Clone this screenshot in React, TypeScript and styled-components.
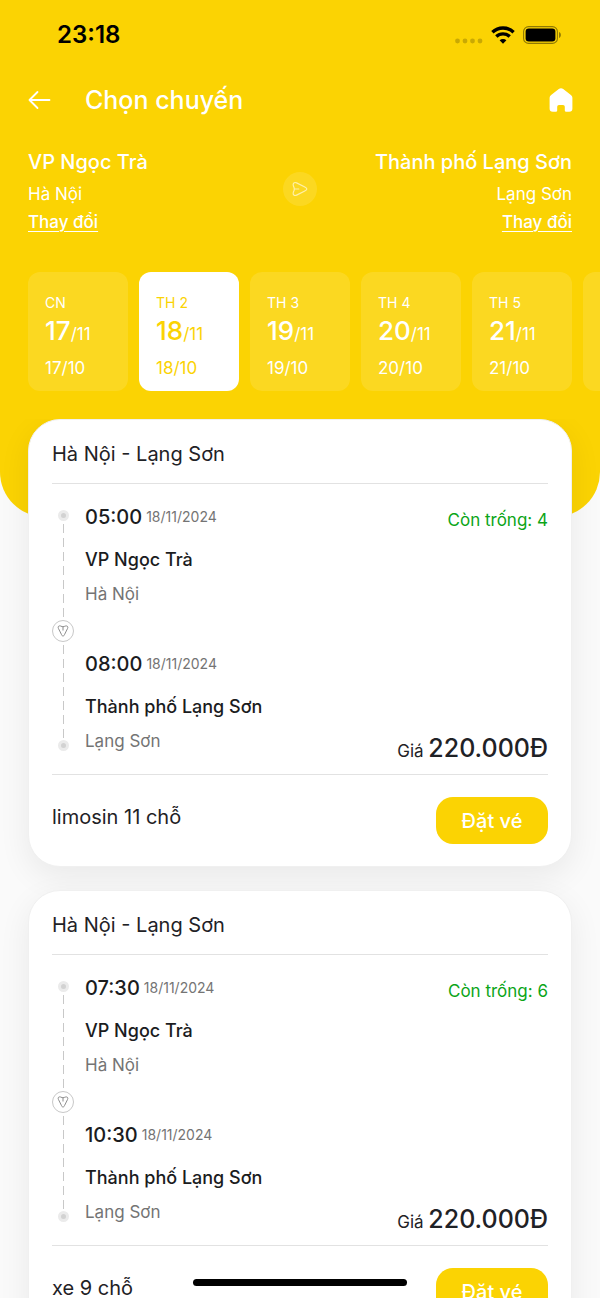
import React from "react";
import styled, { createGlobalStyle, css } from "styled-components";

const yellow = "#fbd303";

const GlobalStyle = createGlobalStyle`
  * { box-sizing: border-box; }
  body { margin: 0; background: #fafafa; }
  body, button { font-family: Inter, "Liberation Sans", sans-serif; }
  h1, h2, p, ul { margin: 0; padding: 0; font-weight: inherit; }
  ul { list-style: none; }
  button { border: 0; padding: 0; background: none; color: inherit; cursor: pointer; }
`;

const Screen = styled.div`
  position: relative;
  display: flex;
  flex-direction: column;
  height: 100vh;
  overflow: hidden;
  color: #1f2226;
`;

const Header = styled.header`
  flex: none;
  padding-bottom: 126px;
  border-radius: 0 0 45px 45px;
  background: ${yellow};
  color: #fff;
`;

const StatusBar = styled.div`
  display: flex;
  align-items: center;
  justify-content: space-between;
  height: 69px;
  padding: 0 39px 0 57px;
  color: #000;
`;

const Clock = styled.time`
  font-size: 24px;
  font-weight: 600;
  line-height: 28px;
`;

const StatusIcons = styled.div`
  display: flex;
  align-items: center;
  gap: 8px;
`;

const NavBar = styled.div`
  display: flex;
  align-items: center;
  height: 62px;
  padding: 0 27px 0 28px;
`;

const IconButton = styled.button`
  display: flex;
`;

const PageTitle = styled.h1`
  flex: 1;
  margin-left: 34px;
  font-size: 25px;
  font-weight: 500;
  line-height: 32px;
`;

const Route = styled.div`
  display: flex;
  align-items: flex-start;
  justify-content: space-between;
  padding: 17px 28px 0;
`;

const Place = styled.div<{ $end?: boolean }>`
  flex: 1;
  display: flex;
  flex-direction: column;
  align-items: ${(p) => (p.$end ? "flex-end" : "flex-start")};
`;

const PlaceName = styled.p`
  font-size: 20px;
  font-weight: 500;
  line-height: 28px;
  white-space: nowrap;
`;

const PlaceCity = styled.p`
  margin-top: 4px;
  font-size: 17px;
  line-height: 28px;
`;

const ChangeLink = styled.a`
  font-size: 17px;
  font-weight: 500;
  line-height: 28px;
  color: inherit;
  text-underline-offset: 3px;
`;

const Direction = styled.div`
  display: flex;
  align-items: center;
  justify-content: center;
  width: 34px;
  height: 34px;
  margin-top: 24px;
  border-radius: 50%;
  background: rgba(255, 255, 255, 0.12);
`;

const Dates = styled.div`
  display: flex;
  gap: 11px;
  margin-top: 36px;
  padding: 0 28px;
  overflow: hidden;
`;

const DateTile = styled.button<{ $selected?: boolean }>`
  flex: none;
  display: flex;
  flex-direction: column;
  align-items: flex-start;
  width: 100px;
  height: 119px;
  padding: 21px 17px 0;
  border-radius: 12px;
  background: rgba(255, 255, 255, 0.12);
  white-space: nowrap;
  ${(p) => p.$selected && css`
    background: #fff;
    color: ${yellow};
  `}
`;

const Weekday = styled.span`
  font-size: 14px;
  line-height: 20px;
`;

const SolarDate = styled.span`
  display: flex;
  align-items: baseline;
  font-size: 17px;
  line-height: 36px;
`;

const Day = styled.span`
  font-size: 26px;
  font-weight: 500;
`;

const LunarDate = styled.span`
  font-size: 17px;
  line-height: 32px;
`;

const TripList = styled.ul`
  flex: 1;
  min-height: 0;
  margin-top: -98px;
  padding: 0 28px;
  overflow-y: auto;
  scrollbar-width: none;
`;

const TripCard = styled.li`
  margin-bottom: 23px;
  padding: 0 23px;
  border: 1px solid #f0f0f0;
  border-radius: 32px;
  background: #fff;
  box-shadow: 0 10px 32px rgba(0, 0, 0, 0.07);
`;

const TripTitle = styled.h2`
  padding: 22px 0 17px;
  border-bottom: 1px solid #e2e2e2;
  font-size: 20px;
  line-height: 24px;
`;

const Journey = styled.div`
  display: flex;
  padding: 19px 0 23px;
  border-bottom: 1px solid #e2e2e2;
`;

const Timeline = styled.div`
  display: flex;
  flex-direction: column;
  align-items: center;
  width: 22px;
  padding-top: 7px;
  margin-right: 11px;
`;

const Dot = styled.span`
  width: 11px;
  height: 11px;
  border: 3px solid #ebebeb;
  border-radius: 50%;
  background: #d2d2d2;
`;

const Dashes = styled.span`
  flex: 1;
  width: 1px;
  margin-top: 3px;
  background: repeating-linear-gradient(#c8c8c8 0 9px, transparent 9px 14px);
`;

const Marker = styled.span`
  display: flex;
  align-items: center;
  justify-content: center;
  width: 22px;
  height: 22px;
  border: 1px solid #c8c8c8;
  border-radius: 50%;
`;

const Stops = styled.div`
  flex: 1;
  display: flex;
  flex-direction: column;
  gap: 46px;
`;

const StopTime = styled.div`
  display: flex;
  align-items: center;
  gap: 4px;
  font-size: 14px;
  line-height: 28px;
  color: #747474;
`;

const Hour = styled.time`
  font-size: 20px;
  font-weight: 500;
  color: #1b1c1e;
`;

const StopName = styled.p`
  margin-top: 17px;
  font-size: 18px;
  font-weight: 500;
  line-height: 24px;
  color: #1b1c1e;
`;

const StopCity = styled.p`
  margin-top: 12px;
  font-size: 17px;
  line-height: 20px;
  color: #747474;
`;

const Summary = styled.div`
  display: flex;
  flex-direction: column;
  align-items: flex-end;
  justify-content: space-between;
  margin: 5px 0 -16px;
`;

const Seats = styled.p`
  font-size: 17px;
  line-height: 24px;
  color: #0ca518;
`;

const Price = styled.p`
  font-size: 17px;
  line-height: 32px;
`;

const Amount = styled.span`
  font-size: 25px;
  font-weight: 500;
`;

const TripFooter = styled.div`
  display: flex;
  align-items: flex-start;
  justify-content: space-between;
  padding: 22px 0;
`;

const Vehicle = styled.p`
  font-size: 20px;
  line-height: 40px;
`;

const BookButton = styled.button`
  width: 112px;
  height: 47px;
  border-radius: 17px;
  background: ${yellow};
  color: #fff;
  font-size: 20px;
  font-weight: 500;
`;

const HomeIndicator = styled.div`
  position: absolute;
  bottom: 12px;
  left: 50%;
  width: 214px;
  height: 7px;
  margin-left: -107px;
  border-radius: 4px;
  background: #000;
`;

const SignalIcon = () => (
  <svg width="28" height="22" viewBox="0 0 28 22" fill="#c9a903" aria-hidden="true">
    <circle cx="2.5" cy="17" r="2.4" />
    <circle cx="10" cy="17" r="2.4" />
    <circle cx="17.5" cy="17" r="2.4" />
    <circle cx="25" cy="17" r="2.4" />
  </svg>
);

const WifiIcon = () => (
  <svg width="24" height="18" viewBox="0 0 24 18" fill="none" stroke="#000" strokeWidth="3.3" aria-hidden="true">
    <path d="M1.400 6.300a15.200 15.200 0 0 1 21.200 0" />
    <path d="M5.300 10.500a9.600 9.600 0 0 1 13.400 0" />
    <path d="M12 17.800l-3.400-3.500a4.900 4.900 0 0 1 6.800 0z" fill="#000" stroke="none" />
  </svg>
);

const BatteryIcon = () => (
  <svg width="38" height="18" viewBox="0 0 38 18" aria-hidden="true">
    <rect x="0.6" y="0.6" width="33.8" height="16.8" rx="5" fill="none" stroke="#8f7903" strokeWidth="1.1" />
    <rect x="2.6" y="2.6" width="29.8" height="12.8" rx="3.2" />
    <path d="M36 6v6c1.200-.4 1.900-1.600 1.900-3S37.200 6.400 36 6z" fill="#8f7903" />
  </svg>
);

const BackIcon = () => (
  <svg width="23" height="20" viewBox="0 0 23 20" fill="none" stroke="#fff" strokeWidth="1.8" strokeLinecap="round" strokeLinejoin="round" aria-hidden="true">
    <path d="M9.500 2L1.500 10l8 8M1.500 10H21.500" />
  </svg>
);

const HomeIcon = () => (
  <svg width="24" height="24" viewBox="0 0 24 24" fill="#fff" aria-hidden="true">
    <path d="M9.800 1a3.600 3.600 0 0 1 4.400 0l7.700 5.900a3.600 3.600 0 0 1 1.500 2.900V20.600a3.200 3.200 0 0 1-3.200 3.200h-3a1.400 1.400 0 0 1-1.400-1.400V18.800a1.800 1.800 0 0 0-1.800-1.800h-4a1.800 1.800 0 0 0-1.800 1.800v3.600a1.400 1.400 0 0 1-1.400 1.400H3.800a3.200 3.200 0 0 1-3.200-3.200V9.800a3.600 3.600 0 0 1 1.500-2.900z" />
  </svg>
);

const SendIcon = ({ size, color, down }: { size: number; color: string; down?: boolean }) => (
  <svg width={size} height={size} viewBox="0 0 16 16" fill="none" stroke={color} strokeWidth="1.2" strokeLinecap="round" strokeLinejoin="round" aria-hidden="true">
    <g transform={down ? "rotate(90 8 8)" : undefined}>
      <path d="M1.300 4.600C.600 2.200 2.300.800 4.600 1.900L12.800 6c2.700 1.300 2.700 2.700 0 4L4.600 14.100C2.300 15.200.600 13.800 1.300 11.400L2.100 9.200c.3-.9.3-1.500 0-2.400zM2.600 8h4.200" />
    </g>
  </svg>
);

const dates = [
  ["CN", "17", "17/10"],
  ["TH 2", "18", "18/10"],
  ["TH 3", "19", "19/10"],
  ["TH 4", "20", "20/10"],
  ["TH 5", "21", "21/10"],
  ["TH 6", "22", "22/10"],
];

const trips = [
  { depart: "05:00", arrive: "08:00", seats: 4, vehicle: "limosin 11 chỗ" },
  { depart: "07:30", arrive: "10:30", seats: 6, vehicle: "xe 9 chỗ" },
];

function Stop({ time, name, city }: { time: string; name: string; city: string }) {
  return (
    <div>
      <StopTime>
        <Hour>{time}</Hour>
        <span>18/11/2024</span>
      </StopTime>
      <StopName>{name}</StopName>
      <StopCity>{city}</StopCity>
    </div>
  );
}

export default function App() {
  return (
    <Screen>
      <GlobalStyle />
      <Header>
        <StatusBar>
          <Clock>23:18</Clock>
          <StatusIcons>
            <SignalIcon />
            <WifiIcon />
            <BatteryIcon />
          </StatusIcons>
        </StatusBar>
        <NavBar>
          <IconButton aria-label="Quay lại"><BackIcon /></IconButton>
          <PageTitle>Chọn chuyến</PageTitle>
          <IconButton aria-label="Trang chủ"><HomeIcon /></IconButton>
        </NavBar>
        <Route>
          <Place>
            <PlaceName>VP Ngọc Trà</PlaceName>
            <PlaceCity>Hà Nội</PlaceCity>
            <ChangeLink href="#from">Thay đổi</ChangeLink>
          </Place>
          <Direction><SendIcon size={16} color="#fff0a8" /></Direction>
          <Place $end>
            <PlaceName>Thành phố Lạng Sơn</PlaceName>
            <PlaceCity>Lạng Sơn</PlaceCity>
            <ChangeLink href="#to">Thay đổi</ChangeLink>
          </Place>
        </Route>
        <Dates>
          {dates.map(([weekday, day, lunar]) => (
            <DateTile key={day} $selected={day === "18"} aria-pressed={day === "18"}>
              <Weekday>{weekday}</Weekday>
              <SolarDate><Day>{day}</Day>/11</SolarDate>
              <LunarDate>{lunar}</LunarDate>
            </DateTile>
          ))}
        </Dates>
      </Header>
      <TripList>
        {trips.map((trip) => (
          <TripCard key={trip.depart}>
            <TripTitle>Hà Nội - Lạng Sơn</TripTitle>
            <Journey>
              <Timeline>
                <Dot />
                <Dashes />
                <Marker><SendIcon size={12} color="#808080" down /></Marker>
                <Dashes />
                <Dot />
              </Timeline>
              <Stops>
                <Stop time={trip.depart} name="VP Ngọc Trà" city="Hà Nội" />
                <Stop time={trip.arrive} name="Thành phố Lạng Sơn" city="Lạng Sơn" />
              </Stops>
              <Summary>
                <Seats>Còn trống: {trip.seats}</Seats>
                <Price>Giá <Amount>220.000Đ</Amount></Price>
              </Summary>
            </Journey>
            <TripFooter>
              <Vehicle>{trip.vehicle}</Vehicle>
              <BookButton>Đặt vé</BookButton>
            </TripFooter>
          </TripCard>
        ))}
      </TripList>
      <HomeIndicator />
    </Screen>
  );
}
